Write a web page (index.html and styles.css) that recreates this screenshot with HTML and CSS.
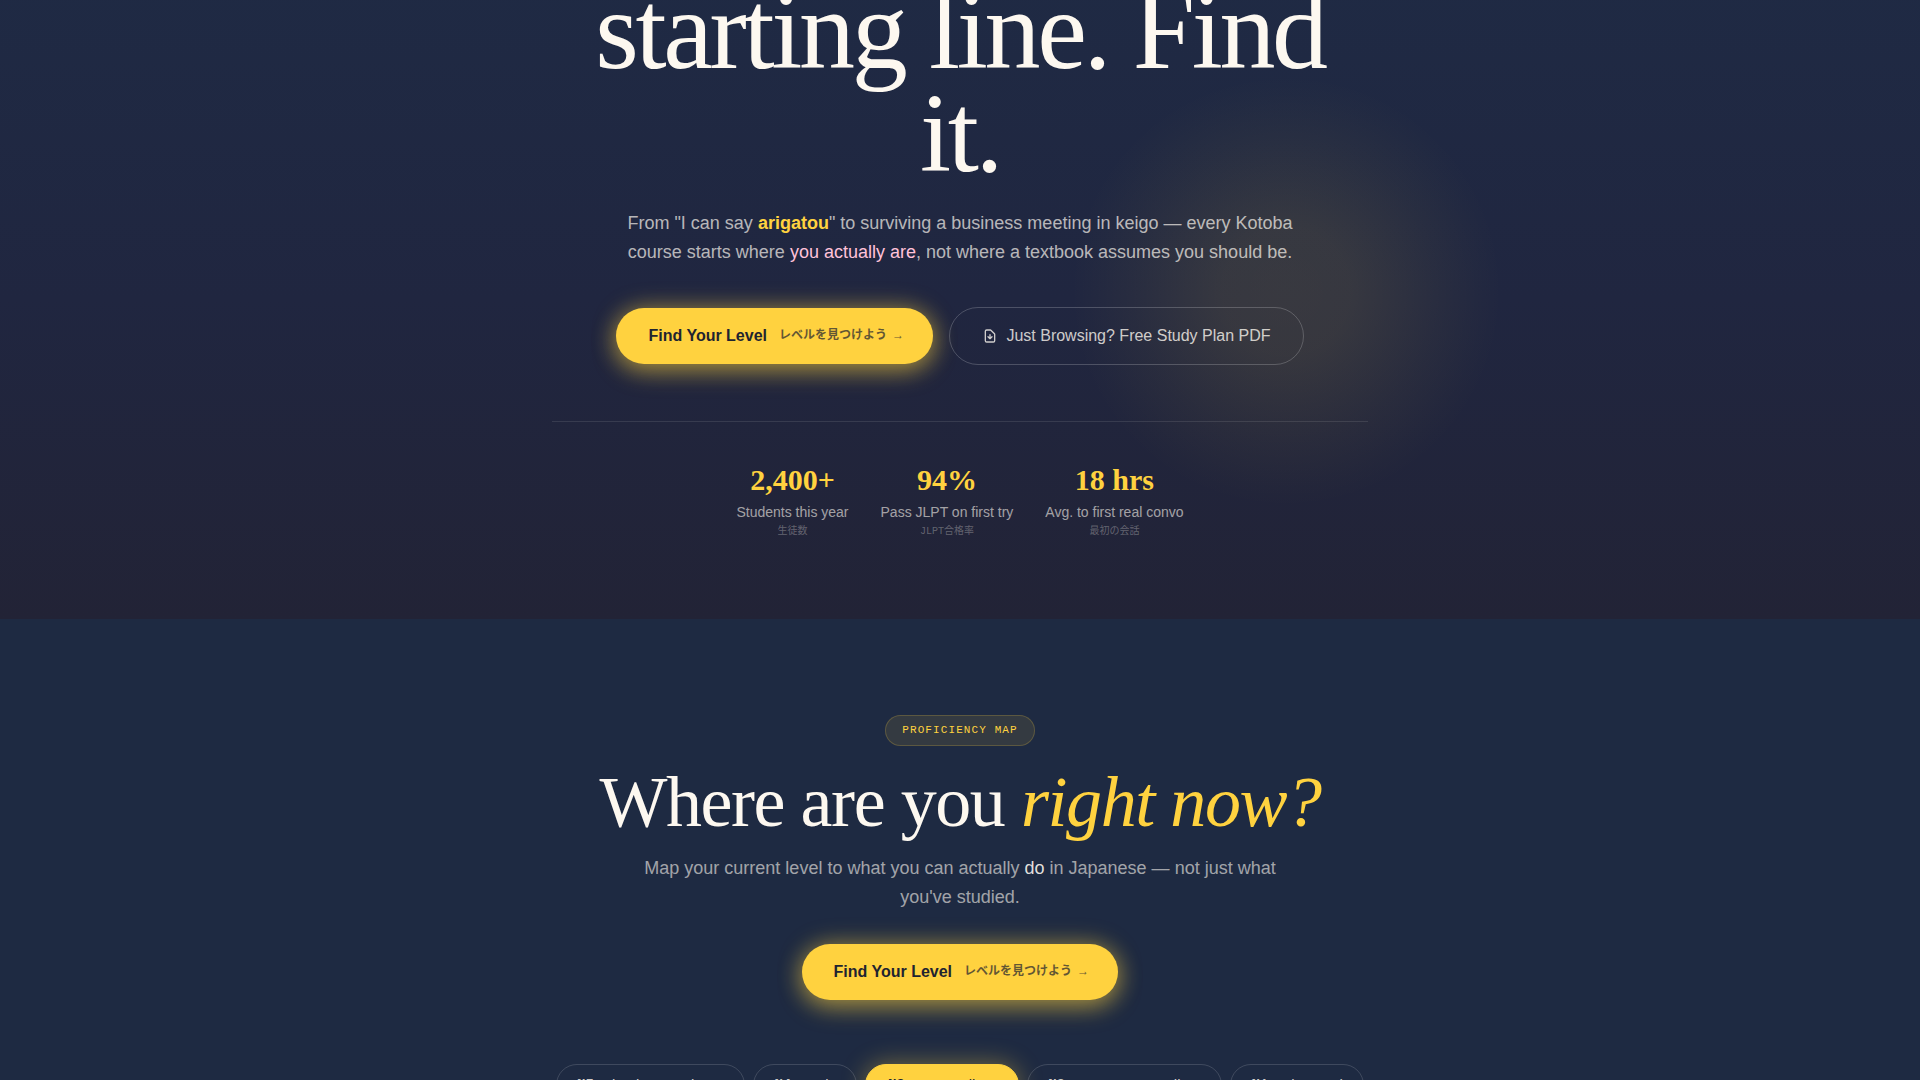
FILE: index.html
```html
<!DOCTYPE html>
<html lang="en">
<head>
    <meta charset="UTF-8">
    <meta name="viewport" content="width=device-width, initial-scale=1.0">
    <title>Kotoba</title>
    <link rel="stylesheet" href="styles.css">
</head>
<body>

    <section class="hero">
        <div class="container">
            <h1>starting line. Find it.</h1>
            <p class="lead">From "I can say <strong>arigatou</strong>" to surviving a business meeting in keigo — every Kotoba course starts where <span class="pink">you actually are</span>, not where a textbook assumes you should be.</p>
            <div class="actions">
                <a href="#levels" class="btn btn-primary">Find Your Level <span class="jp" lang="ja">レベルを見つけよう →</span></a>
                <a href="#plan" class="btn btn-ghost">
                    <svg class="icon" viewBox="0 0 24 24" fill="none" stroke="currentColor" stroke-width="2" stroke-linecap="round" stroke-linejoin="round" aria-hidden="true">
                        <path d="M12 10v6m0 0l-3-3m3 3l3-3m2 8H7a2 2 0 01-2-2V5a2 2 0 012-2h5.586a1 1 0 01.707.293l5.414 5.414a1 1 0 01.293.707V19a2 2 0 01-2 2z"/>
                    </svg>
                    Just Browsing? Free Study Plan PDF
                </a>
            </div>
            <div class="stats">
                <div class="stat">
                    <div class="stat-number">2,400+</div>
                    <div class="stat-label">Students this year</div>
                    <div class="stat-jp" lang="ja">生徒数</div>
                </div>
                <div class="stat">
                    <div class="stat-number">94%</div>
                    <div class="stat-label">Pass JLPT on first try</div>
                    <div class="stat-jp" lang="ja">JLPT合格率</div>
                </div>
                <div class="stat">
                    <div class="stat-number">18 hrs</div>
                    <div class="stat-label">Avg. to first real convo</div>
                    <div class="stat-jp" lang="ja">最初の会話</div>
                </div>
            </div>
        </div>
    </section>

    <section class="levels" id="levels">
        <div class="container">
            <span class="badge">PROFICIENCY MAP</span>
            <h2>Where are you <em>right now?</em></h2>
            <p class="sub">Map your current level to what you can actually <span class="light">do</span> in Japanese — not just what you've studied.</p>
            <a href="#quiz" class="btn btn-primary">Find Your Level <span class="jp" lang="ja">レベルを見つけよう →</span></a>
            <div class="tabs">
                <button type="button" class="tab"><b>N5</b> Absolute Beginner</button>
                <button type="button" class="tab"><b>N4</b> Basic</button>
                <button type="button" class="tab active"><b>N3</b> Intermediate</button>
                <button type="button" class="tab"><b>N2</b> Upper Intermediate</button>
                <button type="button" class="tab"><b>N1</b> Advanced</button>
            </div>
        </div>
    </section>

</body>
</html>
```
FILE: styles.css
```css
* {
    box-sizing: border-box;
}
body {
    margin: 0;
    height: 100vh;
    overflow: hidden;
    background-color: #1e2a42;
    color: #fdf8f0;
    font-family: "Liberation Sans", "Noto Sans CJK JP", Arial, sans-serif;
    font-size: 16px;
}
h1,
h2,
p {
    margin: 0;
}
h1,
h2 {
    font-family: "Liberation Serif", "Times New Roman", serif;
    font-weight: 400;
}
.container {
    max-width: 816px;
    margin: 0 auto;
    text-align: center;
}

/* Hero */
.hero {
    margin-top: -21px;
    padding-bottom: 80px;
    background:
        radial-gradient(circle 216px at 67% 312px, rgba(255, 210, 63, 0.11), rgba(255, 210, 63, 0.1) 30%, rgba(255, 210, 63, 0.04) 70%, rgba(255, 210, 63, 0.01) 90%, transparent),
        linear-gradient(180deg, #1f2a44 0%, #202640 50%, #222336 100%);
}
h1 {
    padding-bottom: 24px;
    font-size: 112px;
    line-height: 103px;
    letter-spacing: -0.03em;
}
.lead,
.sub {
    max-width: 672px;
    margin: 0 auto;
    font-size: 18px;
    line-height: 29px;
    color: rgba(253, 248, 240, 0.7);
}
.lead strong {
    color: #ffd23f;
}
.pink {
    color: #ffc2d9;
}
.actions {
    display: flex;
    justify-content: center;
    align-items: center;
    gap: 16px;
    margin-top: 40px;
}
.btn {
    display: inline-flex;
    align-items: center;
    padding: 16px 32px;
    border-radius: 32px;
    font-size: 16px;
    line-height: 24px;
    text-decoration: none;
    vertical-align: top;
}
.btn-primary {
    gap: 12px;
    background-color: #ffd23f;
    color: #1f2430;
    font-weight: 700;
    box-shadow: 0 0 24px rgba(255, 210, 63, 0.4), 0 8px 24px rgba(255, 210, 63, 0.4);
}
.jp {
    font-family: "Liberation Mono", "Noto Sans CJK JP", monospace;
    font-size: 12px;
    opacity: 0.7;
}
.btn-ghost {
    gap: 8px;
    border: 1px solid rgba(255, 255, 255, 0.2);
    color: rgba(253, 248, 240, 0.8);
}
.icon {
    width: 16px;
    height: 16px;
}
.stats {
    display: flex;
    justify-content: center;
    gap: 32px;
    margin-top: 56px;
    padding-top: 40px;
    border-top: 1px solid rgba(255, 255, 255, 0.1);
}
.stat-number {
    font-family: "Liberation Serif", "Times New Roman", serif;
    font-size: 30px;
    font-weight: 700;
    line-height: 36px;
    color: #ffd23f;
}
.stat-label {
    margin-top: 4px;
    font-size: 14px;
    line-height: 20px;
    color: rgba(253, 248, 240, 0.6);
}
.stat-jp {
    margin-top: 2px;
    font-family: "Liberation Mono", "Noto Sans CJK JP", monospace;
    font-size: 10px;
    line-height: 15px;
    color: rgba(253, 248, 240, 0.3);
}

/* Proficiency map */
.levels {
    padding-top: 96px;
}
.badge {
    display: inline-block;
    padding: 6px 16px;
    border: 1px solid rgba(255, 210, 63, 0.2);
    border-radius: 16px;
    background-color: rgba(255, 210, 63, 0.1);
    color: #ffd23f;
    font-family: "Liberation Mono", "Courier New", monospace;
    font-size: 11px;
    line-height: 17px;
    letter-spacing: 0.1em;
    vertical-align: top;
}
h2 {
    margin: 20px 0 16px;
    font-size: 72px;
    line-height: 72px;
    letter-spacing: -0.02em;
}
h2 em {
    color: #ffd23f;
}
.sub {
    margin-bottom: 32px;
    color: rgba(253, 248, 240, 0.6);
}
.light {
    color: rgba(253, 248, 240, 0.9);
}
.tabs {
    display: flex;
    justify-content: center;
    gap: 8px;
    margin-top: 64px;
}
.tab {
    display: flex;
    align-items: center;
    gap: 8px;
    padding: 10px 20px;
    border: 1px solid rgba(255, 255, 255, 0.15);
    border-radius: 24px;
    background: none;
    color: rgba(253, 248, 240, 0.8);
    font-family: inherit;
    font-size: 15px;
    line-height: 20px;
    white-space: nowrap;
}
.tab b {
    font-family: "Liberation Mono", "Courier New", monospace;
    font-size: 14px;
}
.tab.active {
    padding: 10px 22px;
    border-color: #ffd23f;
    background-color: #ffd23f;
    color: #1f2430;
    box-shadow: 0 0 24px rgba(255, 210, 63, 0.4);
}
```
